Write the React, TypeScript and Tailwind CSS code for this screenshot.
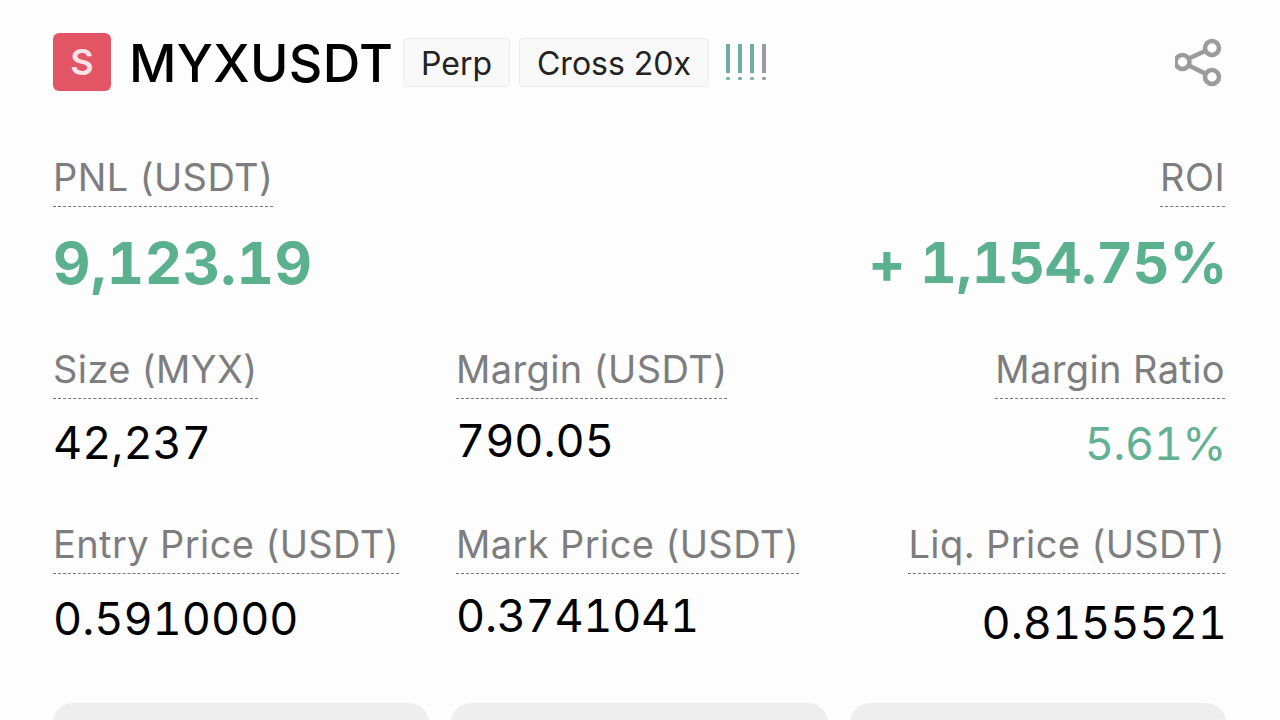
import React from "react";

const font = { fontFamily: "Inter, 'Open Sans', sans-serif" };

const Label = ({ text }: { text: string }) => (
  <span className="inline-block border-b border-dashed border-[#77777a] pb-[5px] text-[38px] leading-[47px] tracking-[0.4px] whitespace-nowrap text-[#7d7d80]">
    {text}
  </span>
);

const ShareIcon = () => (
  <svg width="50" height="50" viewBox="0 0 50 50" fill="none" stroke="#9b9b9b" strokeWidth="4.5">
    <circle cx="37" cy="11" r="7" />
    <circle cx="7.5" cy="25" r="7" />
    <circle cx="37" cy="40" r="7" />
    <path d="M14 21.5 30 14M14 28.5 30 36.5" />
  </svg>
);

const Signal = () => (
  <svg width="44" height="40" viewBox="0 0 44 40" className="ml-[16px] mt-[3px]">
    {["#6fae9d", "#6fae9d", "#6fae9d", "#9a9a9c"].map((c, i) => (
      <g key={i} fill={c}>
        <rect x={1 + i * 12} y="0" width="4" height="29" />
        <rect x={1 + i * 12} y="33" width="4" height="3" rx="1.5" />
      </g>
    ))}
  </svg>
);

const Stats = [
  [
    { label: "Size (MYX)", value: "42,237", cls: "text-black mt-[17px]" },
    { label: "Margin (USDT)", value: "790.05", cls: "text-black mt-[15px]" },
    { label: "Margin Ratio", value: "5.61%", cls: "text-[#62b193] mt-[18px] tracking-[-0.5px] -mr-[1px]", right: true },
  ],
  [
    { label: "Entry Price (USDT)", value: "0.5910000", cls: "text-black mt-[18px]" },
    { label: "Mark Price (USDT)", value: "0.3741041", cls: "text-black mt-[15px] tracking-[-0.3px]" },
    { label: "Liq. Price (USDT)", value: "0.8155521", cls: "text-black mt-[22px] -mr-[2px]", right: true },
  ],
];

export default function App() {
  return (
    <div style={font} className="w-[1280px] h-[720px] overflow-hidden bg-[#fdfdfd] pl-[53px] pr-[55px] pt-[33px] box-border">
      <div className="flex items-center h-[58px]">
        <div className="w-[58px] h-[58px] rounded-[6px] bg-[#e25564] flex items-center justify-center text-[36px] font-semibold text-[#fbe3e6]">
          S
        </div>
        <div className="ml-[18px] pt-[3px] w-[263px] whitespace-nowrap text-[52px] font-medium text-black leading-none tracking-[0.3px]">
          MYXUSDT
        </div>
        <div className="ml-[11px] pt-[3px] h-[49px] w-[107px] rounded-[4px] border border-[#ebebeb] bg-[#f8f8f8] flex items-center justify-center text-[32px] text-[#222]">
          Perp
        </div>
        <div className="ml-[9px] pt-[3px] h-[49px] w-[190px] rounded-[4px] border border-[#ebebeb] bg-[#f8f8f8] flex items-center justify-center text-[32px] text-[#222]">
          Cross 20x
        </div>
        <Signal />
        <div className="ml-auto">
          <ShareIcon />
        </div>
      </div>

      <div className="flex justify-between mt-[63px]">
        <div>
          <Label text="PNL (USDT)" />
          <div className="text-[58px] leading-[72px] font-bold tabular-nums text-[#5bb08d] mt-[20px] tracking-[0.4px]">
            9,123.19
          </div>
        </div>
        <div className="text-right">
          <Label text="ROI" />
          <div className="text-[57px] leading-[72px] font-bold tabular-nums text-[#5bb08d] mt-[20px] tracking-[-0.3px] -mr-[2px]">
            + 1,154.75%
          </div>
        </div>
      </div>

      {Stats.map((row, r) => (
        <div key={r} className={`grid grid-cols-[403px_1fr_auto] ${r === 0 ? "mt-[47px]" : "mt-[50px]"}`}>
          {row.map((s) => (
            <div key={s.label} className={s.right ? "text-right" : ""}>
              <Label text={s.label} />
              <div className={`text-[45px] leading-[54px] tabular-nums ${s.cls}`}>{s.value}</div>
            </div>
          ))}
        </div>
      ))}

      <div className="grid grid-cols-3 gap-[22px] mt-[53px] w-[1173px]">
        {[0, 1, 2].map((i) => (
          <div key={i} className="h-[60px] rounded-[20px] bg-[#eeeeee]" />
        ))}
      </div>
    </div>
  );
}
